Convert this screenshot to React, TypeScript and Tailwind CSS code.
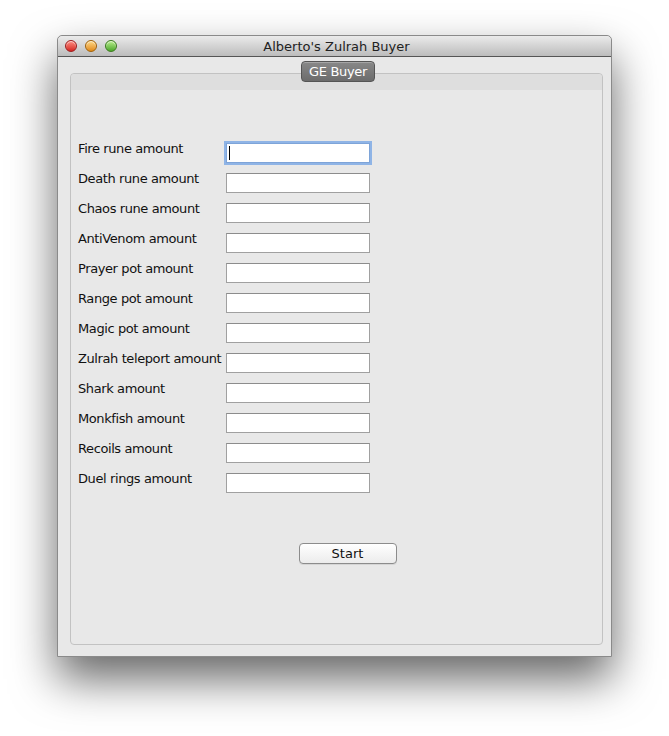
import React from 'react';

const fields = [
  'Fire rune amount',
  'Death rune amount',
  'Chaos rune amount',
  'AntiVenom amount',
  'Prayer pot amount',
  'Range pot amount',
  'Magic pot amount',
  'Zulrah teleport amount',
  'Shark amount',
  'Monkfish amount',
  'Recoils amount',
  'Duel rings amount',
];

function Light({ from, to, ring }: { from: string; to: string; ring: string }) {
  return (
    <span
      className={`block h-[12px] w-[12px] rounded-full border ${ring} bg-gradient-to-b ${from} ${to} shadow-[inset_0_1px_1px_rgba(255,255,255,0.7)]`}
    />
  );
}

export default function App() {
  return (
    <div
      className="min-h-[736px] w-[669px] bg-white pl-[57px] pt-[35px] text-[13px] text-[#111]"
      style={{ fontFamily: '"Lucida Grande", "DejaVu Sans", "Noto Sans", sans-serif' }}
    >
      <div className="flex h-[622px] w-[555px] flex-col rounded-t-[5px] border border-[#8a8a8a] bg-[#e8e8e8] shadow-[0_22px_45px_rgba(0,0,0,0.6)]">
        {/* title bar */}
        <div className="relative flex h-[21px] items-center rounded-t-[5px] border-b border-[#555] bg-gradient-to-b from-[#ebebeb] to-[#bcbcbc]">
          <div className="absolute left-[7px] top-[4px] flex gap-[8px]">
            <Light from="from-[#ff8a80]" to="to-[#d42020]" ring="border-[#9c1c1c]" />
            <Light from="from-[#ffd980]" to="to-[#e08a10]" ring="border-[#a06008]" />
            <Light from="from-[#b8ef8a]" to="to-[#4aa828]" ring="border-[#3a7a1c]" />
          </div>
          <div className="w-full pl-[4px] text-center leading-[21px] text-[#222]">Alberto&apos;s Zulrah Buyer</div>
        </div>

        {/* content */}
        <div className="flex flex-1 flex-col pb-[11px] pl-[12px] pr-[8px] pt-[16px]">
          <div className="relative flex flex-1 flex-col rounded-[4px] border border-[#c2c2c2] bg-[#e8e8e8]">
            <div className="absolute left-[230px] top-[-13px] flex h-[21px] w-[74px] items-center justify-center rounded-[4px] border border-[#555] bg-gradient-to-b from-[#888] to-[#6c6c6c] text-[#fff] tracking-[-0.3px] shadow-[inset_0_1px_0_rgba(255,255,255,0.25)]">
              GE Buyer
            </div>
            <div className="h-[16px] rounded-t-[4px] bg-[#dedede]" />
            <div className="flex flex-col pl-[7px] pt-[50px]">
              {fields.map((label, i) => (
                <div key={label} className="flex h-[30px] items-start">
                  <div className="w-[148px] whitespace-nowrap pt-[1px] leading-[16px] tracking-[-0.4px]">{label}</div>
                  <div
                    className={
                      i === 0
                        ? 'mt-[3px] flex h-[20px] w-[144px] items-center border border-[#7ea4d8] bg-white pl-[2px] shadow-[0_0_0_2px_#8fb4e6]'
                        : 'mt-[3px] h-[20px] w-[144px] border border-[#a0a0a0] border-t-[#8c8c8c] bg-white'
                    }
                  >
                    {i === 0 && <span className="block h-[14px] w-[1px] bg-black" />}
                  </div>
                </div>
              ))}
            </div>
            <div className="flex justify-center pl-[22px] pt-[43px]">
              <button className="h-[21px] w-[98px] rounded-[4px] border border-[#8c8c8c] bg-gradient-to-b from-[#ffffff] to-[#ececec] text-[13px] leading-[18px] text-[#111] shadow-[0_1px_0_rgba(0,0,0,0.08)]">
                Start
              </button>
            </div>
          </div>
        </div>
      </div>
    </div>
  );
}
